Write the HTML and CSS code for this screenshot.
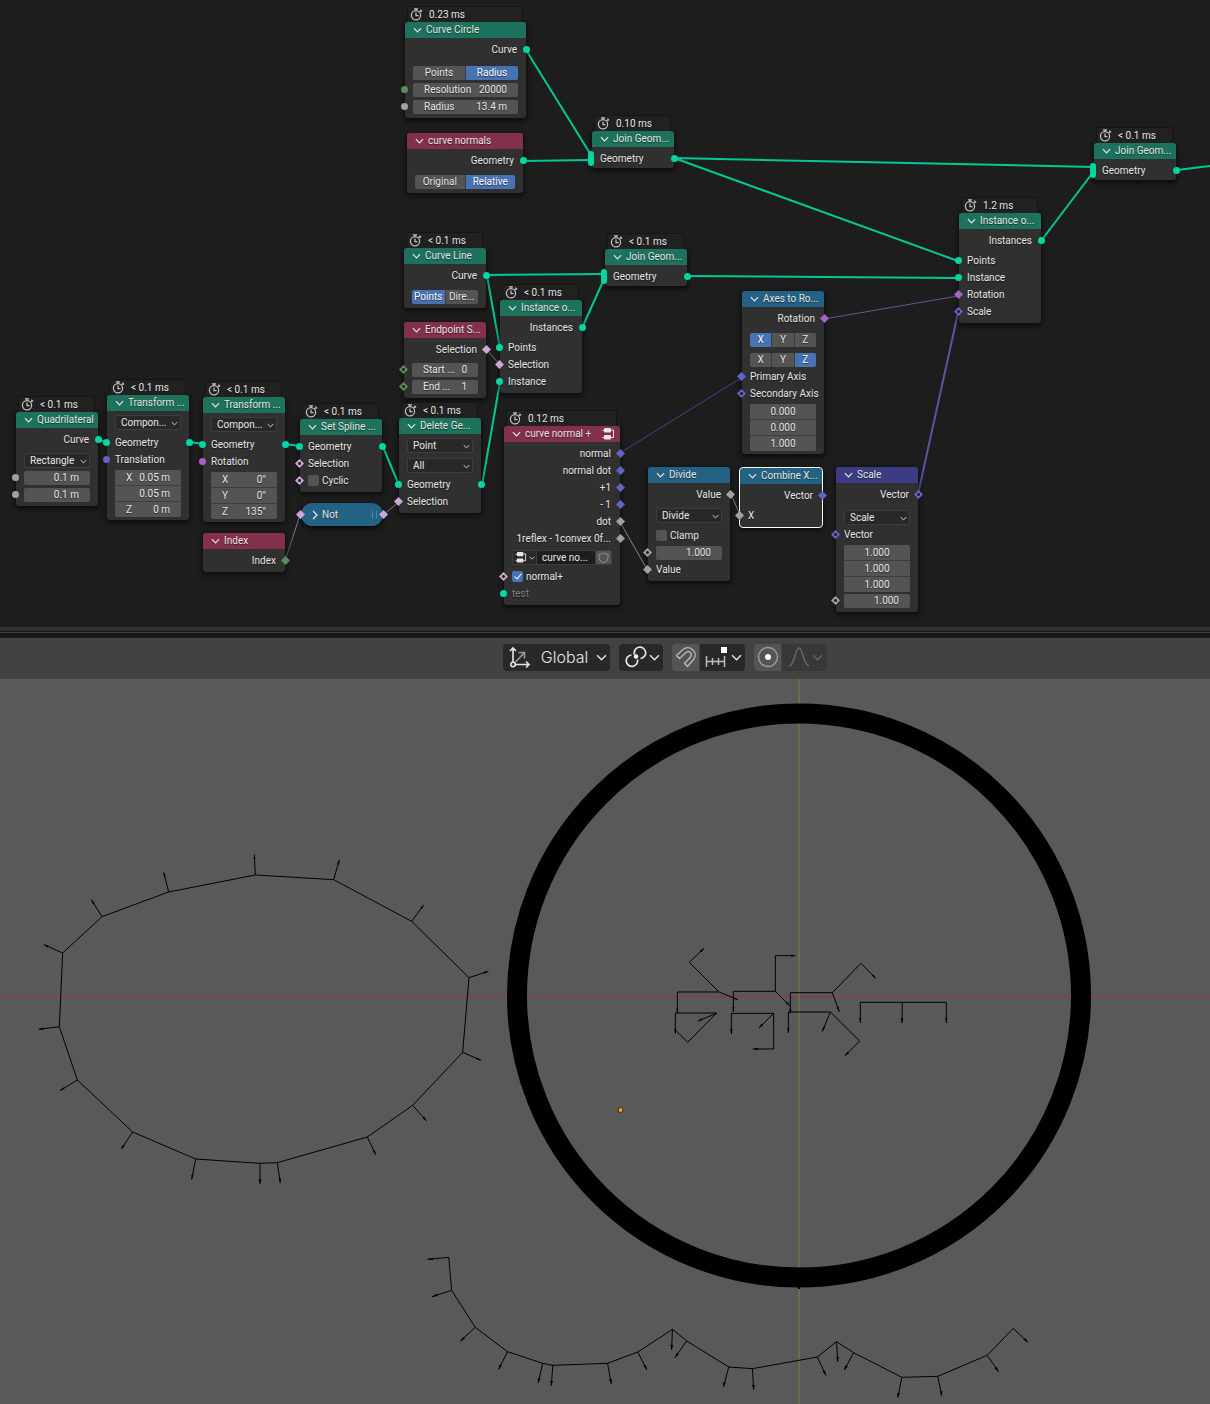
FILE: index.html
```html
<!DOCTYPE html>
<html lang="en">
<head>
<meta charset="utf-8">
<title>Geometry Nodes</title>
<link rel="stylesheet" href="styles.css">
</head>
<body>
<svg class="defs" aria-hidden="true">
  <symbol id="watch" viewBox="0 0 13 13"><g fill="none" stroke="currentColor" stroke-width="1.200"><circle cx="6" cy="7.300" r="4.600"/><path d="M4 .8h4M6 1v2M6 4.500v3.200h2.500M10.400 1.600l1.700 1.700M11.300 2.400l-1.500 1.400"/></g></symbol>
  <symbol id="down" viewBox="0 0 10 6"><path d="M1 1l4 4 4-4" fill="none" stroke="currentColor" stroke-width="1.300"/></symbol>
  <symbol id="group" viewBox="0 0 14 12"><rect x="2" y="0" width="7" height="4.500" rx="1" fill="currentColor"/><rect x="2" y="7" width="7" height="4.500" rx="1" fill="currentColor"/><path d="M9 2h2.500v7.500H9M2 2.500H.5M2 9.500H.5" fill="none" stroke="currentColor"/></symbol>
</svg>

<main class="app">
<section class="editor" aria-label="Node editor">
  <svg class="wires" width="1210" height="627" aria-hidden="true">
    <defs>
      <linearGradient id="fade" x1="0" y1="1" x2="0" y2="0"><stop offset="0.300" stop-color="#42704a"/><stop offset="0.600" stop-color="#8a7090"/></linearGradient>
    </defs>
    <g class="geo">
      <path d="M526 50L591 155M523 161L591 160M674 158L1094 167M674 158L958 261M1177 170L1210 166M1041 241L1094 171M487 275L605 274M487 276L500 348M582 328L605 277M687 276L958 278M482 485L500 382M98 440L107 442M190 442L203 444M285 444L300 446M383 447L399 485"/>
    </g>
    <path class="thin lilac" d="M487 350L500 365M383 515L399 502"/>
    <path class="thin" stroke="url(#fade)" d="M285 561L300 515"/>
    <path class="thin blue" d="M620 453L741 378"/>
    <path class="thin purple" d="M824 319L958 296"/>
    <path class="scale-wire" d="M918 494L958 313"/>
    <path class="thin gray" d="M620 522L648 571M731 494L740 515"/>
  </svg>

  <article class="node geometry wide" id="curve-circle">
    <div class="timer"><svg><use href="#watch"/></svg>0.23 ms</div>
    <h2><svg><use href="#down"/></svg>Curve Circle</h2>
    <div class="body">
      <div class="row out">Curve<i class="dot green right"></i></div>
      <div class="row gap-l"><div class="seg"><button>Points</button><button class="on">Radius</button></div></div>
      <div class="row"><i class="dot int left"></i><div class="field"><label for="res">Resolution</label><input id="res" value="20000"></div></div>
      <div class="row"><i class="dot grey left"></i><div class="field"><label for="rad">Radius</label><input id="rad" value="13.4 m"></div></div>
    </div>
  </article>

  <article class="node input medium" id="curve-normals">
    <h2><svg><use href="#down"/></svg>curve normals</h2>
    <div class="body">
      <div class="row out">Geometry<i class="dot green right"></i></div>
      <div class="row gap-m"><div class="seg"><button>Original</button><button class="on">Relative</button></div></div>
    </div>
  </article>

  <article class="node geometry join" id="join-a">
    <div class="timer"><svg><use href="#watch"/></svg>0.10 ms</div>
    <h2><svg><use href="#down"/></svg>Join Geom...</h2>
    <div class="body"><div class="row"><i class="multi"></i>Geometry<i class="dot green right"></i></div></div>
  </article>

  <article class="node geometry join" id="join-b">
    <div class="timer"><svg><use href="#watch"/></svg>&lt; 0.1 ms</div>
    <h2><svg><use href="#down"/></svg>Join Geom...</h2>
    <div class="body"><div class="row"><i class="multi"></i>Geometry<i class="dot green right"></i></div></div>
  </article>

  <article class="node geometry join" id="join-c">
    <div class="timer"><svg><use href="#watch"/></svg>&lt; 0.1 ms</div>
    <h2><svg><use href="#down"/></svg>Join Geom...</h2>
    <div class="body"><div class="row"><i class="multi"></i>Geometry<i class="dot green right"></i></div></div>
  </article>

  <article class="node geometry" id="instance-b">
    <div class="timer"><svg><use href="#watch"/></svg>1.2 ms</div>
    <h2><svg><use href="#down"/></svg>Instance o...</h2>
    <div class="body">
      <div class="row out">Instances<i class="dot green right"></i></div>
      <div class="row gap-s"><i class="dot green left"></i>Points</div>
      <div class="row"><i class="dot green left"></i>Instance</div>
      <div class="row"><i class="dia purple left"></i>Rotation</div>
      <div class="row"><i class="dia blue hollow left"></i>Scale</div>
    </div>
  </article>

  <article class="node geometry" id="curve-line">
    <div class="timer"><svg><use href="#watch"/></svg>&lt; 0.1 ms</div>
    <h2><svg><use href="#down"/></svg>Curve Line</h2>
    <div class="body">
      <div class="row out">Curve<i class="dot green right"></i></div>
      <div class="row gap-m"><div class="seg"><button class="on">Points</button><button>Dire...</button></div></div>
    </div>
  </article>

  <article class="node input" id="endpoint">
    <h2><svg><use href="#down"/></svg>Endpoint S...</h2>
    <div class="body">
      <div class="row out">Selection<i class="dia pink right"></i></div>
      <div class="row gap-s"><i class="dia int hollow left"></i><div class="field"><label for="start">Start ...</label><input id="start" value="0"></div></div>
      <div class="row"><i class="dia int hollow left"></i><div class="field"><label for="end">End ...</label><input id="end" value="1"></div></div>
    </div>
  </article>

  <article class="node geometry" id="instance-a">
    <div class="timer"><svg><use href="#watch"/></svg>&lt; 0.1 ms</div>
    <h2><svg><use href="#down"/></svg>Instance o...</h2>
    <div class="body">
      <div class="row out">Instances<i class="dot green right"></i></div>
      <div class="row gap-s"><i class="dot green left"></i>Points</div>
      <div class="row"><i class="dia pink left"></i>Selection</div>
      <div class="row"><i class="dot green left"></i>Instance</div>
    </div>
  </article>

  <article class="node geometry" id="quadrilateral">
    <div class="timer"><svg><use href="#watch"/></svg>&lt; 0.1 ms</div>
    <h2><svg><use href="#down"/></svg>Quadrilateral</h2>
    <div class="body">
      <div class="row out">Curve<i class="dot green right"></i></div>
      <div class="row gap-m"><div class="drop"><select aria-label="Mode"><option>Rectangle</option></select><svg><use href="#down"/></svg></div></div>
      <div class="row"><i class="dot grey left"></i><div class="field"><input aria-label="Width" value="0.1 m"></div></div>
      <div class="row"><i class="dot grey left"></i><div class="field"><input aria-label="Height" value="0.1 m"></div></div>
    </div>
  </article>

  <article class="node geometry" id="transform-a">
    <div class="timer"><svg><use href="#watch"/></svg>&lt; 0.1 ms</div>
    <h2><svg><use href="#down"/></svg>Transform ...</h2>
    <div class="body">
      <div class="row"><div class="drop"><select aria-label="Mode"><option>Compon...</option></select><svg><use href="#down"/></svg></div></div>
      <div class="row gap-s"><i class="dot green left"></i>Geometry<i class="dot green right"></i></div>
      <div class="row"><i class="dot blue left"></i>Translation</div>
      <div class="vector">
        <div class="field"><label for="tx">X</label><input id="tx" value="0.05 m"></div>
        <div class="field"><input aria-label="Y" value="0.05 m"></div>
        <div class="field"><label for="tz">Z</label><input id="tz" value="0 m"></div>
      </div>
    </div>
  </article>

  <article class="node geometry" id="transform-b">
    <div class="timer"><svg><use href="#watch"/></svg>&lt; 0.1 ms</div>
    <h2><svg><use href="#down"/></svg>Transform ...</h2>
    <div class="body">
      <div class="row"><div class="drop"><select aria-label="Mode"><option>Compon...</option></select><svg><use href="#down"/></svg></div></div>
      <div class="row gap-s"><i class="dot green left"></i>Geometry<i class="dot green right"></i></div>
      <div class="row"><i class="dot purple left"></i>Rotation</div>
      <div class="vector">
        <div class="field"><label for="rx">X</label><input id="rx" value="0°"></div>
        <div class="field"><label for="ry">Y</label><input id="ry" value="0°"></div>
        <div class="field"><label for="rz">Z</label><input id="rz" value="135°"></div>
      </div>
    </div>
  </article>

  <article class="node input" id="index">
    <h2><svg><use href="#down"/></svg>Index</h2>
    <div class="body"><div class="row out">Index<i class="dia int right"></i></div></div>
  </article>

  <article class="node geometry" id="set-spline">
    <div class="timer"><svg><use href="#watch"/></svg>&lt; 0.1 ms</div>
    <h2><svg><use href="#down"/></svg>Set Spline ...</h2>
    <div class="body">
      <div class="row"><i class="dot green left"></i>Geometry<i class="dot green right"></i></div>
      <div class="row"><i class="dia pink hollow left"></i>Selection</div>
      <div class="row"><i class="dia pink hollow left"></i><label class="check"><input type="checkbox">Cyclic</label></div>
    </div>
  </article>

  <article class="node collapsed" id="not">
    <i class="dia pink left"></i><svg class="open" viewBox="0 0 6 10"><path d="M1 1l4 4-4 4" fill="none" stroke="currentColor" stroke-width="1.300"/></svg>Not<span class="grip"></span><i class="dia pink right"></i>
  </article>

  <article class="node geometry" id="delete">
    <div class="timer"><svg><use href="#watch"/></svg>&lt; 0.1 ms</div>
    <h2><svg><use href="#down"/></svg>Delete Ge...</h2>
    <div class="body">
      <div class="row"><div class="drop"><select aria-label="Domain"><option>Point</option></select><svg><use href="#down"/></svg></div></div>
      <div class="row gap-s"><div class="drop"><select aria-label="Mode"><option>All</option></select><svg><use href="#down"/></svg></div></div>
      <div class="row gap-xs"><i class="dot green left"></i>Geometry<i class="dot green right"></i></div>
      <div class="row"><i class="dia pink left"></i>Selection</div>
    </div>
  </article>

  <article class="node input medium" id="curve-normal-plus">
    <div class="timer"><svg><use href="#watch"/></svg>0.12 ms</div>
    <h2><svg><use href="#down"/></svg>curve normal +<svg class="group"><use href="#group"/></svg></h2>
    <div class="body">
      <div class="row out">normal<i class="dia blue right"></i></div>
      <div class="row out">normal dot<i class="dia blue right"></i></div>
      <div class="row out">+1<i class="dia blue right"></i></div>
      <div class="row out">- 1<i class="dia blue right"></i></div>
      <div class="row out">dot<i class="dia grey right"></i></div>
      <div class="row out">1reflex - 1convex 0f...<i class="dia grey right"></i></div>
      <div class="row gap-xs"><div class="picker">
        <button aria-label="Browse node groups"><svg class="group"><use href="#group"/></svg><svg class="chev"><use href="#down"/></svg></button>
        <input aria-label="Node group" value="curve no...">
        <button class="shield" aria-label="Fake user"><svg viewBox="0 0 12 13"><path d="M6 1Q8 2.500 11 2.500V6q0 4-5 6Q1 10 1 6V2.500Q4 2.500 6 1z" fill="none" stroke="currentColor"/></svg></button>
      </div></div>
      <div class="row gap-xs"><i class="dia pink hollow left"></i><label class="check"><input type="checkbox" checked>normal+</label></div>
      <div class="row muted"><i class="dot green left"></i>test</div>
    </div>
  </article>

  <article class="node convert" id="divide">
    <h2><svg><use href="#down"/></svg>Divide</h2>
    <div class="body">
      <div class="row out">Value<i class="dia grey right"></i></div>
      <div class="row gap-m"><div class="drop"><select aria-label="Operation"><option>Divide</option></select><svg><use href="#down"/></svg></div></div>
      <div class="row gap-s"><label class="check"><input type="checkbox">Clamp</label></div>
      <div class="row"><i class="dia grey hollow left"></i><div class="field"><input aria-label="Value" value="1.000"></div></div>
      <div class="row"><i class="dia grey left"></i>Value</div>
    </div>
  </article>

  <article class="node convert" id="axes">
    <h2><svg><use href="#down"/></svg>Axes to Ro...</h2>
    <div class="body">
      <div class="row out">Rotation<i class="dia purple right"></i></div>
      <div class="row gap-m"><div class="seg"><button class="on">X</button><button>Y</button><button>Z</button></div></div>
      <div class="row gap-s"><div class="seg"><button>X</button><button>Y</button><button class="on">Z</button></div></div>
      <div class="row"><i class="dia blue left"></i>Primary Axis</div>
      <div class="row"><i class="dia blue hollow left"></i>Secondary Axis</div>
      <div class="vector centred">
        <div class="field"><input aria-label="X" value="0.000"></div>
        <div class="field"><input aria-label="Y" value="0.000"></div>
        <div class="field"><input aria-label="Z" value="1.000"></div>
      </div>
    </div>
  </article>

  <article class="node convert selected" id="combine">
    <h2><svg><use href="#down"/></svg>Combine X...</h2>
    <div class="body">
      <div class="row out">Vector<i class="dia blue right"></i></div>
      <div class="row gap-s"><i class="dia grey left"></i>X</div>
    </div>
  </article>

  <article class="node vec" id="scale">
    <h2><svg><use href="#down"/></svg>Scale</h2>
    <div class="body">
      <div class="row out">Vector<i class="dia blue hollow right"></i></div>
      <div class="row gap-l"><div class="drop"><select aria-label="Operation"><option>Scale</option></select><svg><use href="#down"/></svg></div></div>
      <div class="row"><i class="dia blue hollow left"></i>Vector</div>
      <div class="vector centred">
        <div class="field"><input aria-label="X" value="1.000"></div>
        <div class="field"><input aria-label="Y" value="1.000"></div>
        <div class="field"><input aria-label="Z" value="1.000"></div>
      </div>
      <div class="row"><i class="dia grey hollow left"></i><div class="field"><input aria-label="Scale" value="1.000"></div></div>
    </div>
  </article>
</section>

<div class="splitter"></div>

<header class="toolbar">
  <button class="tool">
    <svg class="axes" viewBox="0 0 22 22"><g fill="none" stroke="#e6e6e6" stroke-width="1.600"><path d="M4 16V2M1 5L4 2l3 3M6 18.500h14M17 15.500l3 3-3 3"/><circle cx="4" cy="18.500" r="2.200"/><path d="M6 16.500L15 7M9.500 6.500H15.500V12.500" stroke="#999"/></g></svg>
    <span>Global</span><svg class="chev"><use href="#down"/></svg>
  </button>
  <button class="tool tight" aria-label="Pivot point"><svg class="pivot" viewBox="0 0 22 22"><g fill="none" stroke="#e6e6e6" stroke-width="1.700"><path d="M9.500 8.500A5.700 5.700 0 1 1 15.500 12.500M12.500 13.500A5.700 5.700 0 1 1 6.500 9"/></g><circle cx="11" cy="10.500" r="2.200" fill="#fff"/></svg><svg class="chev"><use href="#down"/></svg></button>
  <div class="pair">
    <button class="tool lit" aria-label="Snap"><svg viewBox="0 0 22 22"><path d="M1.500 9.500L8 3.500C15-2 24 7 18.500 13.500L12.500 20.500 9.500 17.500 15.500 11C18 7.500 14 4 11 6.500L4.500 12.500z" fill="none" stroke="#b4b4b4" stroke-width="1.500"/></svg></button>
    <button class="tool tight" aria-label="Snap to"><svg class="incr" viewBox="0 0 24 22"><path d="M1.500 10v11M7.500 12v7M13.500 12v7M19.500 10v11M1.500 15.500h18" fill="none" stroke="#bbb" stroke-width="1.500"/><rect x="16" y="1" width="6" height="6" fill="#fff"/></svg><svg class="chev"><use href="#down"/></svg></button>
  </div>
  <div class="pair">
    <button class="tool lit" aria-label="Proportional editing"><svg viewBox="0 0 22 22"><circle cx="11" cy="11" r="9.500" fill="none" stroke="#999" stroke-width="1.500"/><circle cx="11" cy="11" r="3" fill="#fff"/></svg></button>
    <button class="tool tight dim" aria-label="Falloff"><svg class="pivot" viewBox="0 0 22 22"><path d="M1 20C7 19 7 2 11 2s4 17 10 18" fill="none" stroke="currentColor" stroke-width="1.500"/></svg><svg class="chev"><use href="#down"/></svg></button>
  </div>
</header>

<section class="viewport" aria-label="3D viewport">
  <svg viewBox="0 679 1210 725" role="img" aria-label="Curves with normals">
    <defs>
      <marker id="head" markerUnits="userSpaceOnUse" markerWidth="16" markerHeight="10" refX="14" refY="5" orient="auto"><path d="M0 1.500L15 5 0 8.500z"/></marker>
    </defs>
    <path d="M0 996.500H1210" stroke="#963844"/>
    <path d="M799 679V1404" stroke="#6a8a38"/>
    <circle cx="799" cy="995.500" r="282" fill="none" stroke="#000" stroke-width="20"/>
    <path d="M798 1287h2v2h-2z"/>
    <g class="curve" transform="translate(20 840) scale(.33333)">
      <path d="M706 105L941 119 1175 244 1347 413 1328 637 1178 796 1042 891 772 968 720 970 527 957 338 876 172 720 118 560 128 339 246 230 446 156z"/>
      <g class="arrows"><path d="M706 105L703 44"/><path d="M941 119L958 60"/><path d="M1175 244L1211 195"/><path d="M1347 413L1405 394"/><path d="M1328 637L1383 661"/><path d="M1178 796L1219 842"/><path d="M1042 891L1067 944"/><path d="M772 968L781 1029"/><path d="M720 970V1032"/><path d="M527 957L515 1018"/><path d="M338 876L304 927"/><path d="M172 720L120 752"/><path d="M118 560L56 568"/><path d="M128 339L72 314"/><path d="M246 230L214 179"/><path d="M446 156L431 97"/></g>
    </g>
    <g class="curve" transform="translate(650 930) scale(.33333)">
      <path d="M118 97L207 186H82M376 77V184H250M633 100L547 188H421M76 249H200L113 337 76 300M244 250H371V357M415 246H541L629 333M631 217H889"/>
      <g class="arrows"><path d="M118 97L162 55"/><path d="M207 186L263 209"/><path d="M82 186V249"/><path d="M376 77H436"/><path d="M376 184L420 228"/><path d="M250 184V246"/><path d="M633 100L677 145"/><path d="M547 188L568 245"/><path d="M421 188V250"/><path d="M76 249V311"/><path d="M200 250L144 273"/><path d="M244 250V312"/><path d="M371 250L327 294"/><path d="M371 357H309"/><path d="M415 246V309"/><path d="M541 246L517 304"/><path d="M629 333L585 377"/><path d="M631 217V279"/><path d="M757 217L756 279"/><path d="M889 217V279"/></g>
    </g>
    <g class="curve" transform="translate(410 1240) scale(.40816 .33333)">
      <path d="M95 52L102 151 160 262 239 335 325 370 350 376 484 370 558 336 643 268 678 303 781 381 839 386 998 351 1045 305 1087 338 1205 412 1293 409 1414 346 1478 265"/>
      <g class="arrows"><path d="M95 52L43 58"/><path d="M102 151L54 170"/><path d="M160 262L123 304"/><path d="M239 335L217 388"/><path d="M325 370L314 429"/><path d="M350 376L346 437"/><path d="M484 370L493 431"/><path d="M558 336L580 389"/><path d="M643 268L641 329"/><path d="M678 303L649 353"/><path d="M781 381L768 440"/><path d="M839 386L842 449"/><path d="M998 351L1019 406"/><path d="M1045 305L1048 365"/><path d="M1087 338L1064 390"/><path d="M1205 412L1195 473"/><path d="M1293 409L1303 468"/><path d="M1414 346L1442 395"/><path d="M1478 265L1514 307"/></g>
    </g>
    <circle cx="620.500" cy="1110" r="2.500" fill="#f09a3c" stroke="#3a2a18"/>
  </svg>
</section>
</main>
</body>
</html>
```
FILE: styles.css
```css
* { box-sizing: border-box; }
body { margin: 0; background: #595959; color: #e6e6e6; font: 10px/17px Roboto, "Noto Sans", sans-serif; }
button, input, select { margin: 0; padding: 0; border: 0; background: none; color: inherit; font: inherit; }
.defs { position: absolute; width: 0; height: 0; }
.app { display: flex; flex-direction: column; min-height: 100vh; }

/* node editor */
.editor { position: relative; height: 627px; overflow: hidden; background: #1d1d1d; }
.wires { position: absolute; left: 0; top: 0; fill: none; }
.geo { stroke: #00c896; stroke-width: 2; }
.thin { stroke-width: 1; }
.lilac { stroke: #86708c; }
.blue.thin { stroke: #48438a; }
.purple.thin { stroke: #75508a; }
.gray { stroke: #858585; }
.scale-wire { stroke: #5854a8; stroke-width: 2; }

.node { position: absolute; width: 82px; border-radius: 3px; background: #303030; box-shadow: 0 2px 5px 1px #0009; text-shadow: 0 1px 1px #0008; white-space: nowrap; }
.node.medium { width: 116px; }
.node.wide { width: 121px; }
.node h2 { display: flex; align-items: center; gap: 4px; height: 16px; margin: 0; padding-left: 8px; border-radius: 3px 3px 0 0; font-size: 10px; line-height: 16px; font-weight: 400; }
.node h2 svg { flex: none; width: 9px; height: 6px; }
.node h2 .group { width: 14px; height: 12px; margin-left: auto; margin-right: 4px; }
.geometry h2 { background: #1d725e; }
.input h2 { background: #83314a; }
.convert h2 { background: #246283; }
.vec h2 { background: #3c3c83; }
.body { padding: 3px 0; }
.join .body { padding-bottom: 1px; }
.selected { outline: 1px solid #fff; }

.timer { position: absolute; bottom: 100%; left: 2px; right: 3px; height: 16px; display: flex; align-items: center; gap: 6px; padding-left: 2px; border: 1px solid #151515; border-bottom: 0; border-radius: 2px 2px 0 0; background: #212121; line-height: 15px; }
.timer svg { width: 13px; height: 13px; color: #c4c4c4; }

.row { position: relative; display: flex; align-items: center; height: 17px; padding: 0 8px; }
.out { justify-content: flex-end; padding-right: 9px; }
.gap-xs { margin-top: 2px; }
.gap-s { margin-top: 3px; }
.gap-m { margin-top: 4px; }
.gap-l { margin-top: 6px; }
.muted { color: #808080; }

/* sockets */
.dot, .dia, .multi { position: absolute; color: #a1a1a1; background: currentColor; }
.dot { top: 5px; width: 7px; height: 7px; border-radius: 50%; }
.dia { top: 4px; width: 9px; height: 9px; clip-path: polygon(50% 0, 100% 50%, 50% 100%, 0 50%); }
.multi { left: -4px; top: 1px; width: 6px; height: 15px; border-radius: 3px; color: #00d6a3; }
.dot.left { left: -4px; }
.dot.right { right: -4px; }
.dia.left { left: -5px; }
.dia.right { right: -5px; }
.hollow { background: radial-gradient(circle, #222 1px, currentColor 2px); }
i.green { color: #00d6a3; }
i.int { color: #598c5c; }
i.blue { color: #6363c7; }
i.purple { color: #a663c7; }
i.pink { color: #cca6d6; }

/* controls */
.field { flex: 1; min-width: 0; height: 14px; display: flex; align-items: center; padding: 0 11px; border-radius: 2px; background: #545454; line-height: 14px; }
.field input { flex: 1; width: 0; min-width: 0; height: 14px; text-align: right; text-shadow: inherit; }
.vector { display: grid; grid-template-rows: repeat(3, 15px); gap: 1px; margin: 2px 8px 0; border-radius: 2px; overflow: hidden; background: #3d3d3d; }
.vector .field { height: 15px; border-radius: 0; }
.centred input { text-align: center; }
.seg { flex: 1; display: flex; gap: 1px; height: 14px; border-radius: 2px; overflow: hidden; background: #3d3d3d; }
.seg button { flex: 1 1 0; min-width: 0; background: #545454; line-height: 14px; text-shadow: inherit; }
.seg .on { background: #4772b3; color: #fff; }
.drop { position: relative; flex: 1; display: flex; height: 15px; border: 1px solid #3d3d3d; border-radius: 2px; background: #282828; }
.drop select { flex: 1; width: 0; padding-left: 5px; appearance: none; line-height: 13px; }
.drop svg { position: absolute; right: 2px; top: 5px; width: 7px; height: 5px; }
.check { display: flex; align-items: center; gap: 3px; }
.check input { appearance: none; width: 11px; height: 11px; border-radius: 2px; background: #545454; }
.check input:checked { background: #4772b3; }
.check input:checked::after { content: ""; display: block; width: 3px; height: 6px; margin: 1px 4px; border: solid #fff; border-width: 0 1px 1px 0; transform: rotate(40deg); }
.picker { flex: 1; display: flex; gap: 1px; height: 15px; border: 1px solid #3d3d3d; border-radius: 2px; background: #3d3d3d; }
.picker button { display: flex; align-items: center; justify-content: center; gap: 1px; width: 23px; background: #282828; }
.picker input { flex: 1; width: 0; padding-left: 5px; background: #1d1d1d; }
.picker .group { width: 13px; height: 11px; }
.picker .chev { width: 6px; height: 4px; }
.picker .shield { width: 15px; background: #545454; color: #999; }
.shield svg { width: 11px; height: 12px; }
.node.collapsed { display: flex; align-items: center; height: 23px; padding: 0 6px 0 11px; border-radius: 12px; background: #246283; }
.collapsed .open { width: 6px; height: 10px; margin-right: 4px; }
.collapsed .dia { top: 7px; }
.grip { width: 5px; height: 7px; margin-left: auto; border: solid #5585a0; border-width: 0 1px; }

/* places on the canvas */
#curve-circle { left: 405px; top: 22px; }
#curve-normals { left: 407px; top: 133px; }
#join-a { left: 592px; top: 131px; }
#join-b { left: 605px; top: 249px; }
#join-c { left: 1094px; top: 143px; }
#instance-b { left: 959px; top: 213px; }
#curve-line { left: 404px; top: 248px; }
#endpoint { left: 404px; top: 322px; }
#instance-a { left: 500px; top: 300px; }
#quadrilateral { left: 16px; top: 412px; }
#transform-a { left: 107px; top: 395px; }
#transform-b { left: 203px; top: 397px; }
#index { left: 203px; top: 533px; }
#set-spline { left: 300px; top: 419px; }
#not { left: 301px; top: 503px; }
#delete { left: 399px; top: 418px; }
#curve-normal-plus { left: 504px; top: 426px; }
#divide { left: 648px; top: 467px; }
#axes { left: 742px; top: 291px; }
#combine { left: 740px; top: 468px; }
#scale { left: 836px; top: 467px; }

/* bars between the editors */
.splitter { height: 12px; border-top: 4px solid #303030; border-bottom: 1px solid #4a4a4a; background: linear-gradient(#151515 1px, #3d3d3d 1px 2px, #181818 2px); }
.toolbar { display: flex; justify-content: center; align-items: center; gap: 9px; height: 40px; padding: 0 0 4px 120px; background: #424242; }
.tool { display: flex; align-items: center; justify-content: center; height: 27px; border-radius: 4px; background: #282828; font: 300 16px/27px Inter, "Noto Sans", sans-serif; padding: 0 3px 0 6px; }
.tool svg { width: 22px; height: 22px; }
.tool .chev { width: 11px; height: 7px; }
.tool span { margin: 0 8px 0 10px; }
.tight { gap: 2px; }
.tool .incr { width: 24px; }
.pair { display: flex; gap: 1px; }
.lit { width: 27px; padding: 0; border-radius: 4px 0 0 4px; background: #545454; }
.pair .tight { padding-left: 5px; border-radius: 0 4px 4px 0; }
.pair .dim { padding: 0 4px 0 6px; background: #383838; color: #666; }
.viewport { flex: 1; background: #595959; }
.viewport svg { display: block; width: 100%; height: auto; }
.curve path { fill: none; stroke: #000; stroke-width: 1px; vector-effect: non-scaling-stroke; }
.arrows path { marker-end: url(#head); }
#head path { fill: #000; stroke: none; }
```
